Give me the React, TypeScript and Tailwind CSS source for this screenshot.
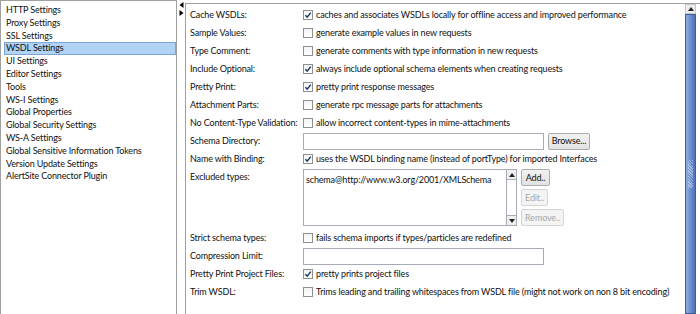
import React from "react";

const FONT = { fontFamily: "Lato, 'Open Sans', sans-serif", letterSpacing: "-0.15px" };

const items = [
  "HTTP Settings",
  "Proxy Settings",
  "SSL Settings",
  "WSDL Settings",
  "UI Settings",
  "Editor Settings",
  "Tools",
  "WS-I Settings",
  "Global Properties",
  "Global Security Settings",
  "WS-A Settings",
  "Global Sensitive Information Tokens",
  "Version Update Settings",
  "AlertSite Connector Plugin",
];

function Check({ checked }: { checked?: boolean }) {
  return (
    <span className="w-[10px] h-[10px] border border-[#8e8f8f] bg-linear-to-b from-[#f4f4f4] to-white flex items-center justify-center shrink-0">
      {checked && (
        <svg width="8" height="8" viewBox="0 0 8 8">
          <path d="M1.3 4.2 L3.2 6.1 L6.8 1.6" fill="none" stroke="#1f3a66" strokeWidth="1.5" />
        </svg>
      )}
    </span>
  );
}

function CheckRow({ label, text, checked }: { label: string; text: string; checked?: boolean }) {
  return (
    <div className="flex items-center h-[18px]">
      <div className="w-[113px] shrink-0 whitespace-nowrap">{label}</div>
      <Check checked={checked} />
      <span className="ml-[3px] whitespace-nowrap">{text}</span>
    </div>
  );
}

function Btn({ children, disabled, w }: { children: React.ReactNode; disabled?: boolean; w: string }) {
  return (
    <div
      className={`${w} h-[17px] border rounded-[2px] flex items-center justify-center whitespace-nowrap ${
        disabled
          ? "border-[#d5d5d5] text-[#a8a8a8] bg-[#f4f4f4]"
          : "border-[#acacac] text-[#111] bg-linear-to-b from-[#f2f2f2] to-[#e2e2e2]"
      }`}
    >
      {children}
    </div>
  );
}

function Arrow({ dir }: { dir: "up" | "down" }) {
  return (
    <svg width="6" height="4" viewBox="0 0 6 4">
      {dir === "up" ? <path d="M0 4 L3 0 L6 4 Z" fill="#222" /> : <path d="M0 0 L3 4 L6 0 Z" fill="#222" />}
    </svg>
  );
}

export default function App() {
  return (
    <div className="w-[700px] h-[314px] bg-white flex overflow-hidden text-[9px] text-[#111]" style={FONT}>
      {/* left list */}
      <div className="w-[177px] h-full border-l border-t border-r border-[#a0a0a0] pt-[3px] shrink-0">
        {items.map((it) => (
          <div
            key={it}
            className={`h-[12.8px] ml-[3px] whitespace-nowrap ${
              it === "WSDL Settings"
                ? "bg-[#b2d3f5] border border-[#7ba6d8] leading-[10.8px] pl-[1px]"
                : "leading-[12.8px] pl-[2px]"
            }`}
          >
            {it}
          </div>
        ))}
      </div>

      {/* splitter */}
      <div className="w-[8px] shrink-0 flex flex-col items-center pt-[2px] gap-[2px]">
        <svg width="5" height="6" viewBox="0 0 5 6" className="block">
          <path d="M4.5 0 L0.5 3 L4.5 6 Z" fill="#000" />
        </svg>
        <svg width="5" height="6" viewBox="0 0 5 6" className="block">
          <path d="M0.5 0 L4.5 3 L0.5 6 Z" fill="#000" />
        </svg>
      </div>

      {/* right panel */}
      <div className="flex-1 min-w-0 mt-[3px] border-l border-t border-[#a0a0a0] flex">
        <div className="flex-1 min-w-0 overflow-hidden pl-[4px] pt-[2px]">
          <CheckRow label="Cache WSDLs:" checked text="caches and associates WSDLs locally for offline access and improved performance" />
          <CheckRow label="Sample Values:" text="generate example values in new requests" />
          <CheckRow label="Type Comment:" text="generate comments with type information in new requests" />
          <CheckRow label="Include Optional:" checked text="always include optional schema elements when creating requests" />
          <CheckRow label="Pretty Print:" checked text="pretty print response messages" />
          <CheckRow label="Attachment Parts:" text="generate rpc message parts for attachments" />
          <CheckRow label="No Content-Type Validation:" text="allow incorrect content-types in mime-attachments" />
          <div className="flex items-center h-[18px]">
            <div className="w-[113px] shrink-0 whitespace-nowrap">Schema Directory:</div>
            <div className="w-[241px] h-[17px] border border-[#a5acb5] bg-white shrink-0" />
            <div className="ml-[4px]">
              <Btn w="w-[42px]">Browse...</Btn>
            </div>
          </div>
          <CheckRow label="Name with Binding:" checked text="uses the WSDL binding name (instead of portType) for imported Interfaces" />
          <div className="flex h-[61px]">
            <div className="w-[113px] shrink-0 h-[18px] flex items-center whitespace-nowrap">Excluded types:</div>
            <div className="w-[214px] h-[57px] mt-[1px] border border-[#a5acb5] flex shrink-0">
              <div className="flex-1 min-w-0 overflow-hidden whitespace-nowrap pl-[2px] pt-[3px]">
                schema@http://www.w3.org/2001/XMLSchema
              </div>
              <div className="w-[10px] border-l border-[#a5acb5] flex flex-col justify-between bg-white">
                <div className="h-[10px] border-b border-[#a5acb5] bg-[#f0f0f0] flex items-center justify-center">
                  <Arrow dir="up" />
                </div>
                <div className="h-[10px] border-t border-[#a5acb5] bg-[#f0f0f0] flex items-center justify-center">
                  <Arrow dir="down" />
                </div>
              </div>
            </div>
            <div className="ml-[4px] mt-[1px] flex flex-col gap-[3px]">
              <Btn w="w-[29px]">Add..</Btn>
              <Btn w="w-[27px]" disabled>
                Edit..
              </Btn>
              <Btn w="w-[43px]" disabled>
                Remove..
              </Btn>
            </div>
          </div>
          <CheckRow label="Strict schema types:" text="fails schema imports if types/particles are redefined" />
          <div className="flex items-center h-[18px]">
            <div className="w-[113px] shrink-0 whitespace-nowrap">Compression Limit:</div>
            <div className="w-[241px] h-[17px] border border-[#a5acb5] bg-white shrink-0" />
          </div>
          <CheckRow label="Pretty Print Project Files:" checked text="pretty prints project files" />
          <CheckRow label="Trim WSDL:" text="Trims leading and trailing whitespaces from WSDL file (might not work on non 8 bit encoding)" />
        </div>

        {/* scrollbar */}
        <div className="w-[11px] mr-[4px] flex flex-col shrink-0">
          <div className="h-[10px] bg-[#eeeeee] border border-[#c8c8c8] flex items-center justify-center">
            <Arrow dir="up" />
          </div>
          <div className="flex-1 border border-[#3f5f9a] bg-linear-to-r from-[#8eaee2] via-[#6a8ed0] to-[#4f72b6] flex items-center justify-center">
            <div className="w-[5px] h-[28px] mt-[20px] opacity-40 bg-[repeating-linear-gradient(45deg,#fff_0px,#fff_1px,transparent_1px,transparent_2px)]" />
          </div>
        </div>
      </div>
    </div>
  );
}
